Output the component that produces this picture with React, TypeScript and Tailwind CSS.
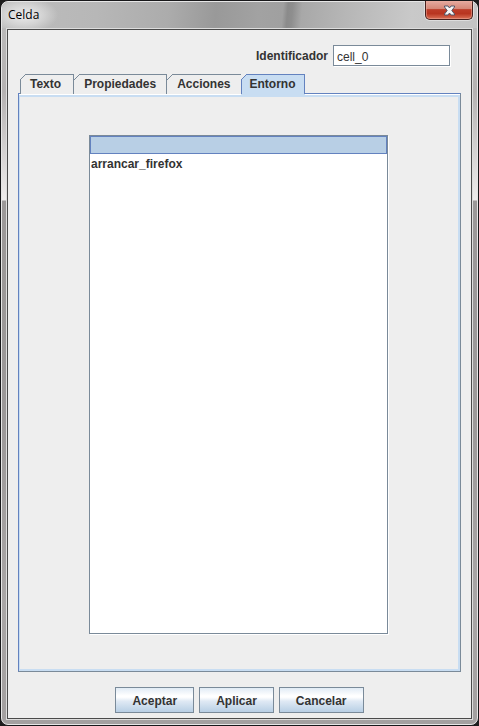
import { useState } from "react";

const buttonClass =
  "h-[26px] border border-[#7a8a99] bg-[linear-gradient(180deg,#e1ebf5_0%,#ffffff_32%,#ffffff_38%,#dfe9f4_55%,#b8cfe5_100%)] px-4 pt-px text-xs font-bold text-[#333333]";

const tabs = ["Texto", "Propiedades", "Acciones", "Entorno"];

function Tab({ label, selected, first, onSelect }: { label: string; selected: boolean; first: boolean; onSelect: () => void }) {
  const line = selected ? "#6382bf" : "#7a8a99";
  const padding = selected ? "border-l px-2" : first ? "border-l pl-[9px] pr-3" : "px-[10px] last:pr-2";
  return (
    <button
      type="button"
      role="tab"
      aria-selected={selected}
      onClick={onSelect}
      className={`relative h-5 border-t border-r pb-px text-xs leading-[18px] font-bold text-[#333333] ${padding} ${
        selected
          ? "-ml-px border-[#6382bf] bg-[#c8ddf2] shadow-[0_1px_0_#c8ddf2]"
          : "border-[#7a8a99] bg-[#eeeeee]"
      }`}
    >
      <svg
        className={first || selected ? "absolute -top-px -left-px" : "absolute -top-px left-0"}
        width="7"
        height="7"
        viewBox="0 0 7 7"
        aria-hidden="true"
        shapeRendering="crispEdges"
      >
        <path d="M0 0H6V1H5V2H4V3H3V4H2V5H1V6H0Z" fill="#eeeeee" />
        <path d="M5 0H7V1H5ZM4 1H5V2H4ZM3 2H4V3H3ZM2 3H3V4H2ZM1 4H2V5H1ZM0 5H1V6H0Z" fill={line} />
      </svg>
      {label}
    </button>
  );
}

export default function App() {
  const [active, setActive] = useState("Entorno");
  const [item, setItem] = useState("");

  return (
    <div className="min-h-screen bg-[#1c1c1c] font-['Liberation_Sans',Arial,sans-serif] text-xs text-[#333333]">
      <main className="flex min-h-screen flex-col overflow-hidden rounded-lg border border-[#18181a] bg-[#a3a0a0]">
        <div className="flex flex-1 flex-col rounded-[7px] border border-[#e6e6e6] bg-[linear-gradient(180deg,#bcbcbc_0px,#b5b2b2_90px,#eeecec_198px,#9b9898_199px,#9c9999_420px,#a9a6a6_600px,#a3a0a0_100%)] px-[4px] pb-[4px]">
          <header className="-mx-[4px] flex h-[26px] items-start justify-between rounded-t-md bg-[radial-gradient(ellipse_34px_18px_at_22px_13px,#ececec_0%,#e0e0e0aa_55%,transparent_100%),linear-gradient(95deg,#bdbdbd_0%,#b7b7b7_20%,#acacac_35%,#999999_45%,#a2a2a2_54%,#a0a0a0_59%,#8b8b8b_60%,#8e8e8e_61%,#a8a8a8_63%,#b6b6b6_72%,#c9c9c9_86%,#c4c4c4_100%)] pr-[4px] pl-[6px]">
            <h1 className="font-['Open_Sans','Noto_Sans',sans-serif] text-xs leading-[26px] text-black">Celda</h1>
            <button
              type="button"
              aria-label="Cerrar"
              className="-mt-px flex h-[19px] w-12 items-center justify-center rounded-b-[5px] border border-t-0 border-[#47201d] bg-[linear-gradient(180deg,#e5aaa0_0%,#d68878_42%,#bd3c28_48%,#b83520_70%,#da7056_100%)] shadow-[0_0_0_1px_#dddddd,inset_0_0_0_1px_#eeaea080]"
            >
              <svg width="13" height="11" viewBox="0 0 13 11" aria-hidden="true">
                <path
                  d="M1.5 1H5L6.5 3L8 1H11.5V2L8.8 5.5L11.5 9V10H8L6.5 8L5 10H1.5V9L4.2 5.5L1.5 2Z"
                  fill="#f6f6f6"
                  stroke="#525668"
                />
              </svg>
            </button>
          </header>

          <div className="flex flex-1 flex-col border border-[#dddddd]">
            <section className="flex flex-1 flex-col border border-[#4a4a4a] bg-[#eeeeee] px-[10px] pt-[15px] pb-[5px]">
              <div className="flex items-center justify-end pr-[11px]">
                <label htmlFor="identifier" className="mr-[5px] font-bold">
                  Identificador
                </label>
                <input
                  id="identifier"
                  defaultValue="cell_0"
                  className="h-[21px] w-[117px] border border-[#7a8a99] bg-white px-[3px] pt-[2px] text-xs shadow-[1px_1px_0_#ffffff] outline-none"
                />
              </div>

              <div role="tablist" className="relative mt-2 flex h-5 items-start pl-[2px]">
                {tabs.map((label, index) => (
                  <Tab
                    key={label}
                    label={label}
                    first={index === 0}
                    selected={active === label}
                    onSelect={() => setActive(label)}
                  />
                ))}
              </div>

              <div
                role="tabpanel"
                className="-mt-px flex flex-1 flex-col border border-t-[#6382bf] border-r-[#7a8a99] border-b-[#7a8a99] border-l-[#6382bf] bg-white pt-px"
              >
                <div className="flex flex-1 flex-col border-t-2 border-r-2 border-b-2 border-l border-[#c8ddf2] bg-[#eeeeee] pt-[38px] pr-[70px] pb-[35px] pl-[69px]">
                  <ul
                    role="listbox"
                    aria-label="Entorno"
                    className="flex-1 border border-[#7a8a99] bg-white font-bold shadow-[1px_1px_0_#ffffff]"
                  >
                    {["", "arrancar_firefox"].map((name) => (
                      <li
                        key={name}
                        role="option"
                        aria-selected={item === name}
                        onClick={() => setItem(name)}
                        className={`h-[18px] border leading-[18px] ${
                          item === name ? "border-[#6382bf] bg-[#b8cfe5]" : "border-transparent"
                        }`}
                      >
                        {name}
                      </li>
                    ))}
                  </ul>
                </div>
              </div>

              <footer className="mt-[15px] flex justify-center gap-[5px]">
                <button type="button" className={buttonClass}>
                  Aceptar
                </button>
                <button type="button" className={buttonClass}>
                  Aplicar
                </button>
                <button type="button" className={buttonClass}>
                  Cancelar
                </button>
              </footer>
            </section>
          </div>
        </div>
      </main>
    </div>
  );
}
